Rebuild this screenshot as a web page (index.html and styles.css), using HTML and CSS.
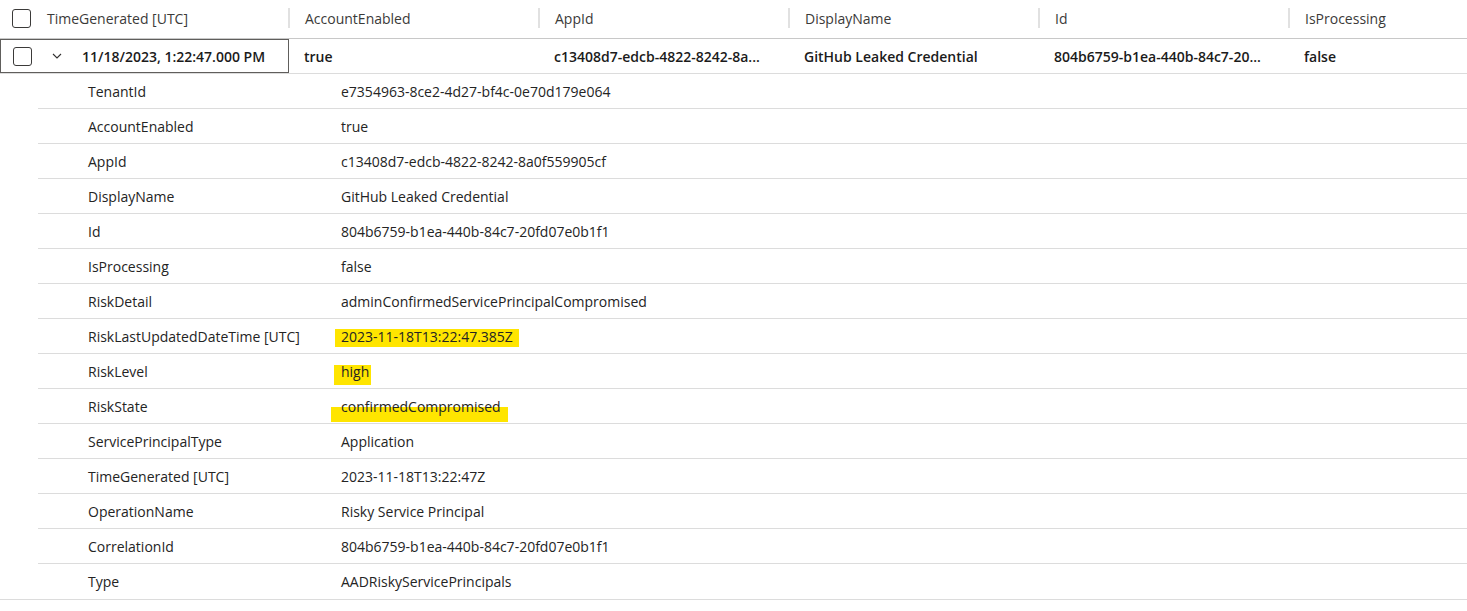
FILE: index.html
```html
<!DOCTYPE html>
<html lang="en">
<head>
    <meta charset="UTF-8">
    <title>Results</title>
    <link rel="stylesheet" href="styles.css">
</head>
<body>
<div class="grid">
    <div class="head">
        <div class="cell first"><span class="check"></span><span>TimeGenerated [UTC]</span></div>
        <div class="cell col">AccountEnabled</div>
        <div class="cell col">AppId</div>
        <div class="cell col">DisplayName</div>
        <div class="cell col">Id</div>
        <div class="cell col">IsProcessing</div>
    </div>
    <div class="row">
        <div class="cell first focus">
            <span class="check"></span>
            <svg class="chev" width="10" height="6" viewBox="0 0 10 6"><path d="M1 1l4 4 4-4" fill="none" stroke="#323130" stroke-width="1.1"/></svg>
            <span>11/18/2023, 1:22:47.000 PM</span>
        </div>
        <div class="cell col">true</div>
        <div class="cell col">c13408d7-edcb-4822-8242-8a...</div>
        <div class="cell col">GitHub Leaked Credential</div>
        <div class="cell col">804b6759-b1ea-440b-84c7-20...</div>
        <div class="cell col">false</div>
    </div>
    <div class="details">
        <div class="detail"><span class="key">TenantId</span><span class="val">e7354963-8ce2-4d27-bf4c-0e70d179e064</span></div>
        <div class="detail"><span class="key">AccountEnabled</span><span class="val">true</span></div>
        <div class="detail"><span class="key">AppId</span><span class="val">c13408d7-edcb-4822-8242-8a0f559905cf</span></div>
        <div class="detail"><span class="key">DisplayName</span><span class="val">GitHub Leaked Credential</span></div>
        <div class="detail"><span class="key">Id</span><span class="val">804b6759-b1ea-440b-84c7-20fd07e0b1f1</span></div>
        <div class="detail"><span class="key">IsProcessing</span><span class="val">false</span></div>
        <div class="detail"><span class="key">RiskDetail</span><span class="val">adminConfirmedServicePrincipalCompromised</span></div>
        <div class="detail"><span class="key">RiskLastUpdatedDateTime [UTC]</span><span class="val"><span class="mark mark-date">2023-11-18T13:22:47.385Z</span></span></div>
        <div class="detail"><span class="key">RiskLevel</span><span class="val"><span class="mark mark-level">high</span></span></div>
        <div class="detail"><span class="key">RiskState</span><span class="val"><span class="mark mark-state">confirmedCompromised</span></span></div>
        <div class="detail"><span class="key">ServicePrincipalType</span><span class="val">Application</span></div>
        <div class="detail"><span class="key">TimeGenerated [UTC]</span><span class="val">2023-11-18T13:22:47Z</span></div>
        <div class="detail"><span class="key">OperationName</span><span class="val">Risky Service Principal</span></div>
        <div class="detail"><span class="key">CorrelationId</span><span class="val">804b6759-b1ea-440b-84c7-20fd07e0b1f1</span></div>
        <div class="detail"><span class="key">Type</span><span class="val">AADRiskyServicePrincipals</span></div>
    </div>
</div>
</body>
</html>
```

FILE: styles.css
```css
* {
    margin: 0;
    padding: 0;
    box-sizing: border-box;
}
html, body {
    width: 100%;
    height: 100%;
    background-color: #fff;
}
body {
    font-family: "Open Sans", "Noto Sans", sans-serif;
    font-size: 14px;
    color: #242424;
}
.grid {
    width: 100%;
    border-bottom: 1px solid #dcdcdc;
}
.head {
    display: flex;
    height: 39px;
    padding-bottom: 2px;
    border-bottom: 1px solid #c8c8c8;
    color: #3b3a39;
}
.row {
    display: flex;
    height: 35px;
    border-bottom: 1px solid #dcdcdc;
    font-weight: 600;
    color: #1b1b1b;
}
.cell {
    display: flex;
    align-items: center;
    white-space: nowrap;
    overflow: hidden;
}
.first {
    width: 289px;
    flex-shrink: 0;
    padding-left: 12px;
}
.head .first .check {
    margin-right: 16px;
}
.col {
    width: 250px;
    flex-shrink: 0;
    position: relative;
    padding-left: 15px;
    overflow: visible;
}
.head .col {
    padding-left: 16px;
}
.head .col::before {
    content: "";
    position: absolute;
    left: -1px;
    top: 8px;
    width: 2px;
    height: 20px;
    background-color: #e1e1e1;
}
.check {
    width: 19px;
    height: 19px;
    border: 1px solid #3b3a39;
    border-radius: 3px;
    flex-shrink: 0;
    background-color: #fff;
}
.chev {
    margin-left: 20px;
    margin-right: 20px;
}
.focus {
    border: 1px solid #605e5c;
    height: 34px;
}
.details {
    display: flex;
    flex-direction: column;
}
.detail {
    display: flex;
    align-items: center;
    height: 35px;
    margin-left: 38px;
    border-bottom: 1px solid #dcdcdc;
    color: #242424;
}
.detail:last-child {
    border-bottom: 0;
}
.key {
    width: 303px;
    padding-left: 50px;
    flex-shrink: 0;
}
.mark {
    position: relative;
    z-index: 0;
}
.mark::before {
    content: "";
    position: absolute;
    z-index: -1;
    background-color: #ffe500;
}
.mark-date::before {
    left: -6px;
    right: -6px;
    top: 2px;
    bottom: -1px;
}
.mark-level::before {
    left: -7px;
    right: -2px;
    top: 3px;
    bottom: -4px;
}
.mark-state::before {
    left: -10px;
    right: -7px;
    top: 10px;
    bottom: -6px;
}
```
